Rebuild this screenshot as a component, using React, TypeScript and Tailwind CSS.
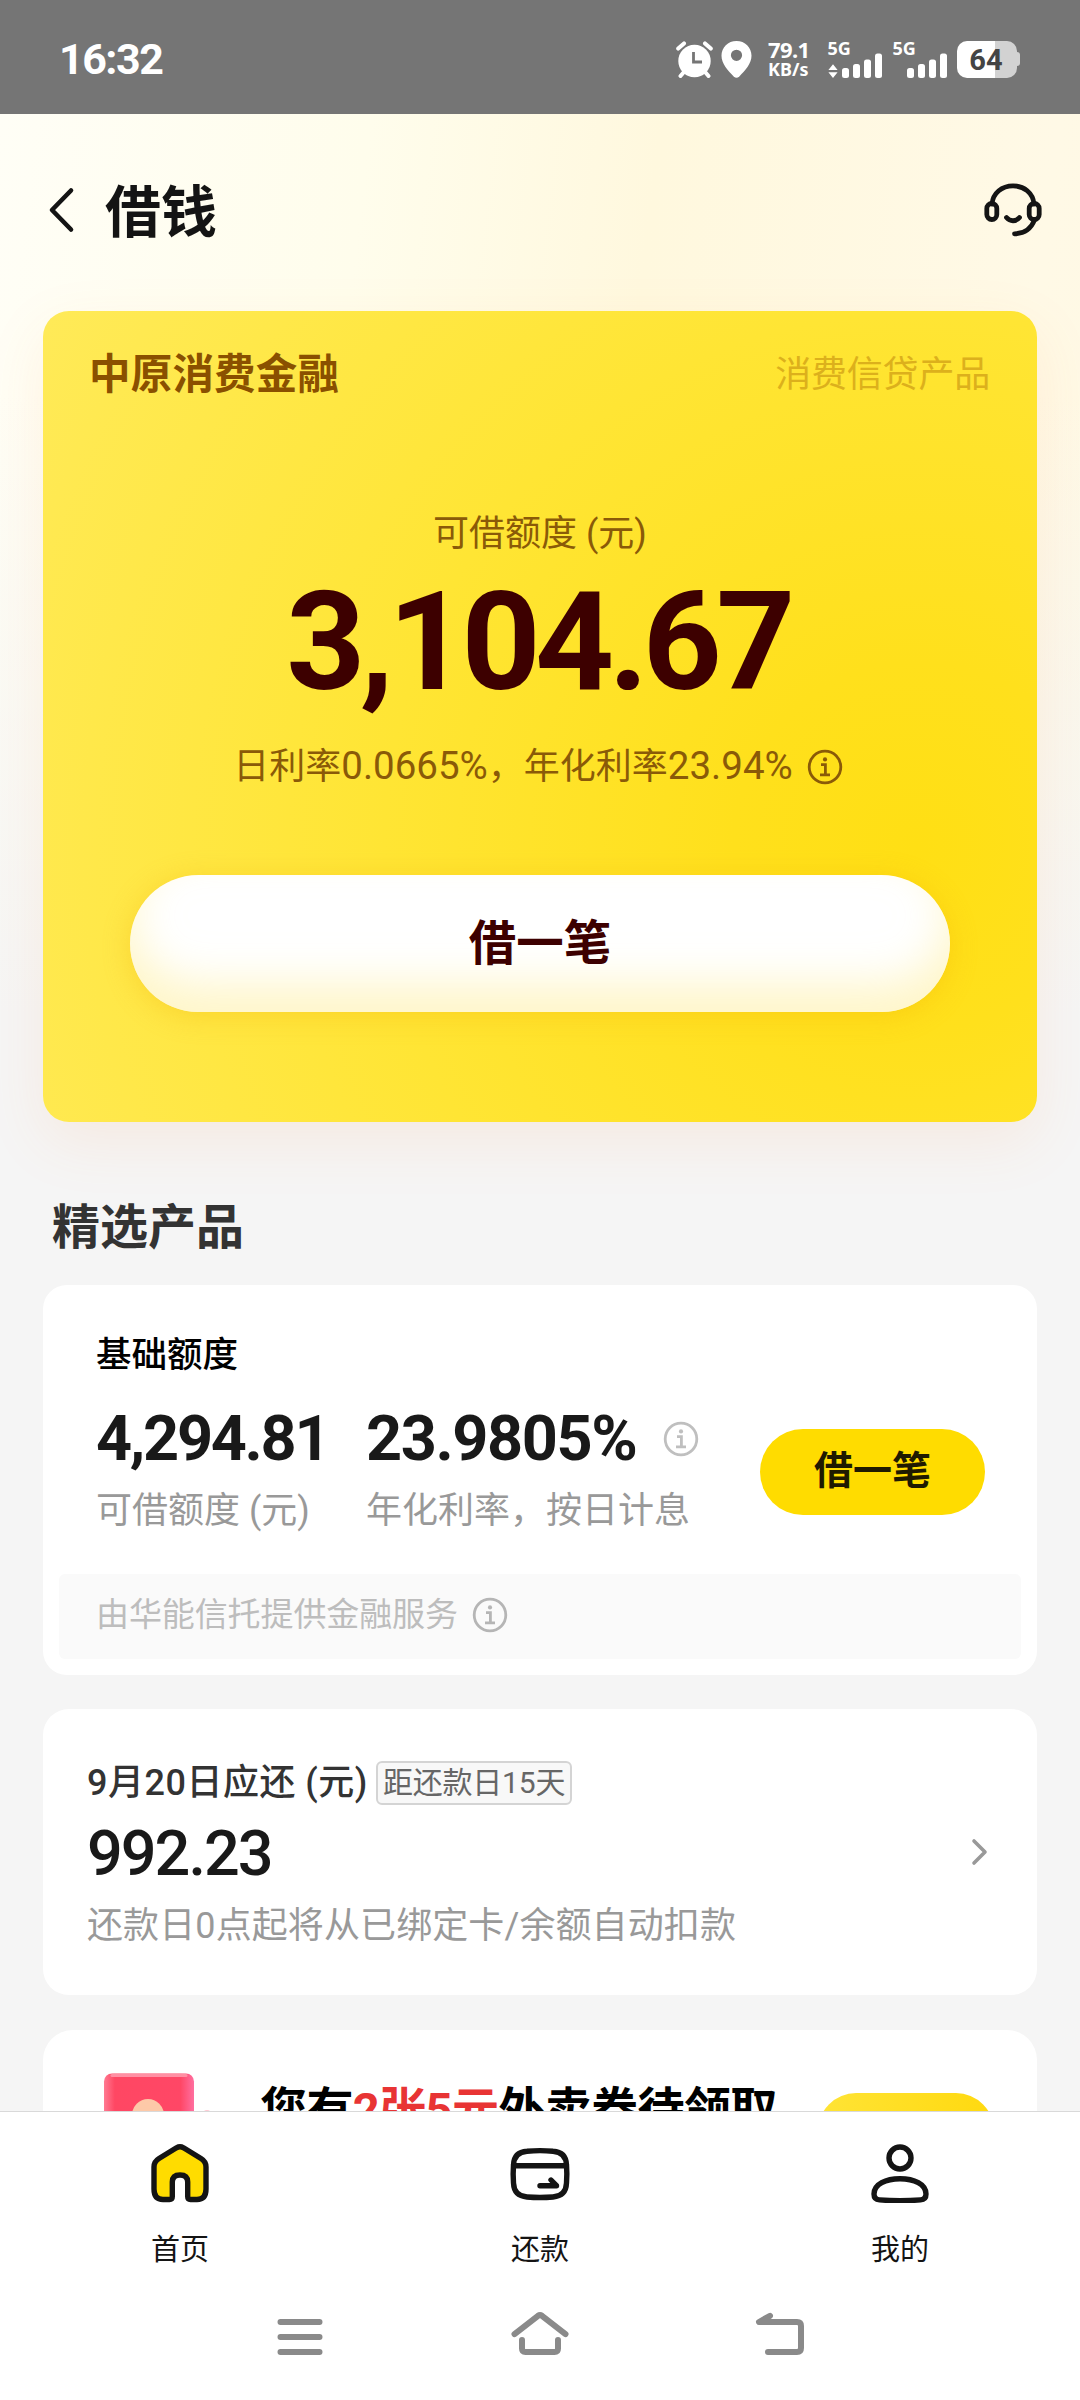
import React from 'react';

type TabItem = {
  label: string;
  icon: React.ReactNode;
};

function InfoIcon({ className }: { className?: string }) {
  return (
    <svg className={className} width="36" height="36" viewBox="0 0 36 36" fill="none" stroke="currentColor" strokeWidth="2.8">
      <circle cx="18" cy="18" r="15.8" />
      <circle cx="18" cy="10.4" r="2.1" fill="currentColor" stroke="none" />
      <path d="M14 15.6h4.4v10M13 25.8h10" />
    </svg>
  );
}

function AlarmIcon() {
  return (
    <svg width="37" height="37" viewBox="0 0 37 37" fill="none">
      <circle cx="18.5" cy="20" r="16.2" fill="#fff" />
      <path d="M2.2 7.6 8 2.4M34.8 7.6 29 2.4M7.5 31.5 4.5 35M29.5 31.5l3 3.5" stroke="#fff" strokeWidth="4" strokeLinecap="round" />
      <path d="M17.5 11v10H26" stroke="#757575" strokeWidth="2.8" />
    </svg>
  );
}

function PinIcon() {
  return (
    <svg width="31" height="37" viewBox="0 0 31 37">
      <path fill="#fff" fillRule="evenodd" d="M15.5 0C7 0 .5 6.3.5 14.8c0 8.2 6.5 14.7 12.4 20.9q2.6 2.3 5.2 0C24 29.5 30.5 23 30.5 14.8 30.5 6.3 24 0 15.5 0Zm0 8.7a5.6 5.6 0 1 1 0 11.2a5.6 5.6 0 0 1 0-11.2Z" />
    </svg>
  );
}

function SignalIcon({ active }: { active?: boolean }) {
  return (
    <svg width="54" height="37" viewBox="0 0 54 37" fill="#fff" className="overflow-visible">
      <text x="-0.5" y="14" fontSize="18" fontWeight="700" className="font-['Noto_Sans','Noto_Sans_CJK_SC',sans-serif]">5G</text>
      {active && <path d="M5 23.2 9.6 29H.4ZM5 37 .4 31.2h9.2Z" />}
      <rect x="14" y="27" width="7" height="10" rx="2.5" />
      <rect x="25" y="23" width="7" height="14" rx="2.5" />
      <rect x="36" y="18.5" width="7" height="18.5" rx="2.5" />
      <rect x="47" y="12.5" width="7" height="24.5" rx="2.5" />
    </svg>
  );
}

function StatusBar() {
  return (
    <div className="flex h-[114px] shrink-0 items-center justify-between bg-[#757575] pt-1 pr-[60px] pl-[59px] text-white">
      <span className="text-[43px] leading-none font-bold tracking-[-1.5px]">16:32</span>
      <div className="flex h-[37px] items-center">
        <AlarmIcon />
        <span className="ml-2 flex"><PinIcon /></span>
        <div className="ml-4 w-[44px] font-['Noto_Sans','Noto_Sans_CJK_SC',sans-serif] font-bold whitespace-nowrap">
          <div className="text-[22px] leading-[20px] tracking-[-0.6px]">79.1</div>
          <div className="text-[18px] leading-[20px]">KB/s</div>
        </div>
        <span className="ml-4 flex"><SignalIcon active /></span>
        <span className="ml-[11px] flex"><SignalIcon /></span>
        <div className="ml-2.5 flex items-center">
          <div className="flex h-[37px] w-[60px] items-center justify-center rounded-[10px] bg-[linear-gradient(90deg,#ffffff_63%,#d2d2d2_63%)] pt-0.5 pr-0.5 text-[29px] leading-none font-bold text-[#444444]">
            64
          </div>
          <div className="h-[14px] w-[3px] rounded-r-sm bg-[#d2d2d2]" />
        </div>
      </div>
    </div>
  );
}

function PageHeader() {
  return (
    <header className="flex h-[197px] items-center pr-[38px] pl-[48px] text-[#141414]">
      <svg width="30" height="50" viewBox="0 0 30 50" fill="none" stroke="currentColor" strokeWidth="4.6" strokeLinecap="round" strokeLinejoin="round" className="-mt-1.5">
        <path d="M23 5.5 4 25 23 44.5" />
      </svg>
      <h1 className="ml-[27px] text-[56px] leading-[60px] font-semibold">借钱</h1>
      <svg width="58" height="54" viewBox="0 0 58 54" fill="none" stroke="currentColor" strokeWidth="4.8" strokeLinecap="round" className="-mt-1.5 ml-auto">
        <path d="M8 21C9 10 18 2.8 29 2.8S49 10 50 21" />
        <rect x="2.8" y="20.5" width="10" height="16" rx="5" />
        <rect x="45.2" y="20.5" width="10" height="16" rx="5" />
        <path d="M50.5 37C47 46 40 50.6 30.5 50.8" />
        <path d="M22.5 34.5c3.5 4.3 9.5 4.3 13 0" />
      </svg>
    </header>
  );
}

function CreditCard() {
  return (
    <section className="mx-[43px] flex h-[811px] flex-col items-center rounded-[26px] bg-[radial-gradient(circle_at_88%_66%,#ffdf14_0%,#ffe01c_18%,#ffe534_52%,#ffea58_100%)] shadow-[0_20px_60px_rgba(255,140,60,0.1)]">
      <div className="flex w-full justify-between pt-[42px] pr-[47px] pl-[46px] leading-[44px]">
        <span className="text-[41.5px] font-bold tracking-[0.2px] text-[#8a5000]">中原消费金融</span>
        <span className="text-[36px] tracking-[-0.2px] text-[#dcb01c]">消费信贷产品</span>
      </div>
      <div className="mt-[117px] text-[36px] leading-[40px] text-[#8a5a08]">可借额度 (元)</div>
      <div className="mt-[18px] pr-1 text-[138px] leading-[140px] font-bold tracking-[-5.7px] text-[#3d0000]">3,104.67</div>
      <div className="mt-[34px] flex items-center pr-1 text-[36px] leading-[40px] text-[#8a5a08]">
        <span className="whitespace-nowrap">
          日利率<span className="text-[38.5px]">0.0665%</span>，年化利率<span className="text-[38.5px]">23.94%</span>
        </span>
        <InfoIcon className="ml-3.5" />
      </div>
      <button className="mt-[88px] h-[137px] w-[820px] rounded-full bg-white pt-0.5 text-[47.5px] font-bold text-[#3d0000] shadow-[0_4px_28px_rgba(240,170,0,0.3),inset_0_-28px_44px_rgba(255,240,165,0.6)]">
        借一笔
      </button>
    </section>
  );
}

function FeaturedProduct() {
  return (
    <section className="mx-[43px] mt-[29px] flex h-[390px] flex-col rounded-[24px] bg-white px-4 pt-[48px]">
      <h3 className="pl-[37px] text-[35.5px] leading-[44px] font-medium text-black">基础额度</h3>
      <div className="flex items-center pr-[36px] pl-[37px]">
        <div className="mt-[30px] w-[270px]">
          <div className="text-[63px] leading-[64px] font-bold tracking-[-2.3px] text-[#191919]">4,294.81</div>
          <div className="mt-[18px] text-[36px] leading-[44px] text-[#999999]">可借额度 (元)</div>
        </div>
        <div className="mt-[30px]">
          <div className="flex items-center">
            <span className="text-[63px] leading-[64px] font-bold tracking-[-1.4px] text-[#191919]">23.9805%</span>
            <InfoIcon className="ml-[26px] text-[#bfbfbf]" />
          </div>
          <div className="mt-[18px] text-[36px] leading-[44px] whitespace-nowrap text-[#999999]">年化利率，按日计息</div>
        </div>
        <button className="mt-[33px] ml-auto h-[86px] w-[225px] rounded-full bg-[#ffdc00] text-[39px] font-bold text-[#1f1a00]">借一笔</button>
      </div>
      <div className="mt-[41px] flex h-[85px] items-center rounded-md bg-[#fafafa] pb-1 pl-[37px] text-[33px] tracking-[-0.1px] text-[#bdbdbd]">
        <span>由华能信托提供金融服务</span>
        <InfoIcon className="ml-[14px] text-[#b5b5b5]" />
      </div>
    </section>
  );
}

function RepaymentCard() {
  return (
    <section className="mx-[43px] mt-[34px] flex h-[286px] items-center rounded-[26px] bg-white pr-[49px] pl-[44px]">
      <div className="pt-1">
        <div className="flex items-center">
          <span className="text-[36px] leading-[44px] font-medium tracking-[0.5px] whitespace-nowrap text-[#333333]">9月20日应还 (元)</span>
          <span className="ml-2 flex h-[44px] items-center rounded-md border-2 border-[#d4d4d4] bg-[#f8f8f8] px-[5px] text-[30px] leading-none tracking-[-0.2px] whitespace-nowrap text-[#666666]">
            距还款日15天
          </span>
        </div>
        <div className="mt-[17px] text-[63px] leading-[64px] font-medium tracking-[-2px] text-[#191919]">992.23</div>
        <div className="mt-[18px] text-[36px] leading-[44px] tracking-[0.1px] text-[#999999]">还款日0点起将从已绑定卡/余额自动扣款</div>
      </div>
      <svg className="ml-auto" width="18" height="28" viewBox="0 0 18 28" fill="none" stroke="#999999" strokeWidth="3.6" strokeLinecap="round" strokeLinejoin="round">
        <path d="M4 3l11 11L4 25" />
      </svg>
    </section>
  );
}

// Only the top edge of this card is visible above the tab bar
function CouponCard() {
  return (
    <section className="mx-[43px] mt-[35px] flex h-[190px] items-start rounded-[30px] bg-white pr-[43px] pl-[59px]">
      <svg className="mt-[42px]" width="110" height="80" viewBox="0 0 110 80">
        <defs>
          <linearGradient id="coupon" x1="0" y1="0" x2="1" y2="0">
            <stop offset="0" stopColor="#ff7a92" />
            <stop offset="0.12" stopColor="#ff4763" />
            <stop offset="0.85" stopColor="#ff4766" />
            <stop offset="1" stopColor="#ff6fa0" />
          </linearGradient>
        </defs>
        <rect x="2" y="1.5" width="90" height="60" rx="8" fill="url(#coupon)" />
        <path d="M10 3.5h74" stroke="#ff8fa3" strokeWidth="3" strokeLinecap="round" />
        <circle cx="46" cy="43" r="16" fill="#fdc9a8" />
        <circle cx="105" cy="42" r="4" fill="#ffc9d3" />
      </svg>
      <div className="ml-[48px] pt-[52px] text-[47px] leading-[56px] font-bold tracking-[-0.6px] whitespace-nowrap text-black">
        您有<span className="text-[#e83434]">2张5元</span>外卖券待领取
      </div>
      <div className="mt-[63px] ml-auto h-[76px] w-[176px] rounded-full bg-[linear-gradient(90deg,#ffe436,#ffd90f)]" />
    </section>
  );
}

const tabs: TabItem[] = [
  {
    label: '首页',
    icon: (
      <path
        fill="#ffdc00"
        d="M26.5 4.8Q30 2.8 33.5 4.8L51 15.5Q56 18.5 56 24V46Q56 56.5 47 56.5H40.5Q37.7 56.5 37.7 53.5V39Q37.7 32 30 32T22.3 39V53.5Q22.3 56.5 19.5 56.5H13Q4 56.5 4 46V24Q4 18.5 9 15.5Z"
      />
    ),
  },
  {
    label: '还款',
    icon: (
      <>
        <path d="M17 8.2Q30 7 43 8.2Q56 9 56.5 22Q57.2 31 56.5 40Q56 53 43 54Q30 55 17 54Q4 53 3.5 40Q2.8 31 3.5 22Q4 9 17 8.2Z" />
        <path d="M4 22.7h52M30 42.7h16.5L41 37" />
      </>
    ),
  },
  {
    label: '我的',
    icon: (
      <>
        <circle cx="30" cy="15" r="11" />
        <path d="M30 35.7C16 35.7 4 41 4 51Q4 56.5 9.5 56.9Q30 58.5 50.5 56.9Q56 56.5 56 51C56 41 44 35.7 30 35.7Z" />
      </>
    ),
  },
];

function TabBar() {
  return (
    <nav className="grid h-[180px] grid-cols-3 border-t border-[#d9d9d9] pt-[31px]">
      {tabs.map((tab) => (
        <div key={tab.label} className="flex flex-col items-center">
          <svg width="60" height="60" viewBox="0 0 60 60" fill="none" stroke="#141414" strokeWidth="5.4" strokeLinecap="round" strokeLinejoin="round">
            {tab.icon}
          </svg>
          <span className="mt-[27px] text-[29px] leading-[40px] text-[#141414]">{tab.label}</span>
        </div>
      ))}
    </nav>
  );
}

const systemIcons = [
  'M10.5 15h39M10.5 30h39M10.5 45h39',
  'M4.5 27.2 28 8.8Q30 7.4 32 8.8L55.5 27.2M12 33v8.5Q12 45 15.5 45h29Q48 45 48 41.5V33',
  'M20 8.8 9 15h38Q51 15 51 19v22Q51 45 47 45H18',
];

function SystemNav() {
  return (
    <div className="grid grid-cols-3 px-[180px] pt-[16px]">
      {systemIcons.map((d) => (
        <svg key={d} className="mx-auto" width="60" height="60" viewBox="0 0 60 60" fill="none" stroke="#8a8a8a" strokeWidth="6" strokeLinecap="round" strokeLinejoin="round">
          <path d={d} />
        </svg>
      ))}
    </div>
  );
}

export default function App() {
  return (
    <div className="flex h-[2400px] w-[1080px] flex-col overflow-hidden bg-[#f5f5f5] font-['Roboto','Noto_Sans_CJK_SC',sans-serif]">
      <StatusBar />
      <main className="h-[1997px] shrink-0 overflow-hidden bg-[linear-gradient(180deg,rgba(245,245,245,0)_0px,rgba(245,245,245,0)_280px,#f5f5f5_900px),linear-gradient(97deg,#fffef6_0%,#fffdec_28%,#fff8de_50%,#fff9e6_80%,#fff8e2_100%)]">
        <PageHeader />
        <CreditCard />
        <h2 className="mt-[78px] px-[52px] text-[48px] leading-[56px] font-bold text-[#333333]">精选产品</h2>
        <FeaturedProduct />
        <RepaymentCard />
        <CouponCard />
      </main>
      <footer className="flex-1 bg-white">
        <TabBar />
        <SystemNav />
      </footer>
    </div>
  );
}
